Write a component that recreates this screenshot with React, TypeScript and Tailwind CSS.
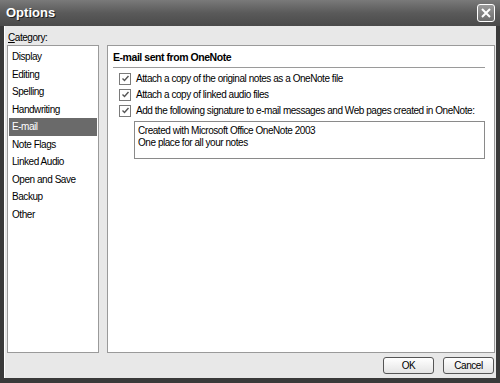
const categories = [
  "Display",
  "Editing",
  "Spelling",
  "Handwriting",
  "E-mail",
  "Note Flags",
  "Linked Audio",
  "Open and Save",
  "Backup",
  "Other",
];

const options = [
  "Attach a copy of the original notes as a OneNote file",
  "Attach a copy of linked audio files",
  "Add the following signature to e-mail messages and Web pages created in OneNote:",
];

function CheckBox() {
  return (
    <span className="flex h-[12px] w-[12px] shrink-0 items-center justify-center border border-[#7a7a7a] bg-white">
      <svg width="9" height="9" viewBox="0 0 9 9">
        <path d="M1.5 4.5 L3.5 6.5 L7.5 2" fill="none" stroke="#555" strokeWidth="1.4" />
      </svg>
    </span>
  );
}

export default function App() {
  return (
    <div
      className="flex h-[383px] w-[500px] flex-col overflow-hidden bg-[#3a3a3a] text-[10px] tracking-[-0.45px] text-black"
      style={{ fontFamily: '"Liberation Sans", Arial, sans-serif' }}
    >
      {/* title bar */}
      <div className="flex h-[26px] shrink-0 items-center justify-between bg-gradient-to-b from-[#7a7a7a] via-[#5a5a5a] to-[#4a4a4a] pl-[6px] pr-[5px]">
        <span className="text-[13px] font-bold tracking-normal text-white [text-shadow:1px_1px_0_#222]">Options</span>
        <span className="flex h-[18px] w-[18px] items-center justify-center rounded-[3px] border border-white bg-gradient-to-b from-[#9a9a9a] to-[#6e6e6e]">
          <svg width="12" height="12" viewBox="0 0 12 12">
            <path d="M2 2 L10 10 M10 2 L2 10" stroke="white" strokeWidth="2" />
          </svg>
        </span>
      </div>

      {/* body */}
      <div className="mx-[4px] mb-[5px] flex flex-1 flex-col border-l border-white bg-[#e8e8e8] pl-[2px] pr-[1px]">
        <div className="pt-[6px] pb-[2px] pl-[1px] leading-[11px]">
          <span className="underline">C</span>ategory:
        </div>

        <div className="flex h-[308px] gap-[8px]">
          {/* category list */}
          <div className="w-[92px] shrink-0 border border-[#9a9a9a] bg-white px-[1px] pt-[2px]">
            {categories.map((c) => (
              <div
                key={c}
                className={
                  c === "E-mail"
                    ? "flex h-[17.5px] items-center whitespace-nowrap bg-[#6a6a6a] pl-[3px] text-white"
                    : "flex h-[17.5px] items-center whitespace-nowrap pl-[3px]"
                }
              >
                {c}
              </div>
            ))}
          </div>

          {/* settings panel */}
          <div className="flex-1 border border-[#9a9a9a] bg-white pl-[5px] pr-[9px] pt-[4px]">
            <div className="border-b border-[#9a9a9a] pb-[1px] text-[10.5px] font-bold">E-mail sent from OneNote</div>
            <div className="mt-[5px] flex flex-col gap-[4px] pl-[6px]">
              {options.map((o) => (
                <div key={o} className="flex h-[12px] items-center gap-[5px]">
                  <CheckBox />
                  <span className="whitespace-nowrap">{o}</span>
                </div>
              ))}
            </div>
            <div className="ml-[21px] mt-[4px] h-[38px] border border-[#8a8a8a] px-[3px] pt-[3px] leading-[12px]">
              <div>Created with Microsoft Office OneNote 2003</div>
              <div>One place for all your notes</div>
            </div>
          </div>
        </div>

        <div className="flex justify-end gap-[9px] pt-[4px] pr-[1px]">
          <button className="h-[17px] w-[51px] rounded-[3px] border border-[#555] bg-gradient-to-b from-white to-[#e4e4e4] text-[10px]">
            OK
          </button>
          <button className="h-[17px] w-[51px] rounded-[3px] border border-[#555] bg-gradient-to-b from-white to-[#e4e4e4] text-[10px]">
            Cancel
          </button>
        </div>
      </div>
    </div>
  );
}
